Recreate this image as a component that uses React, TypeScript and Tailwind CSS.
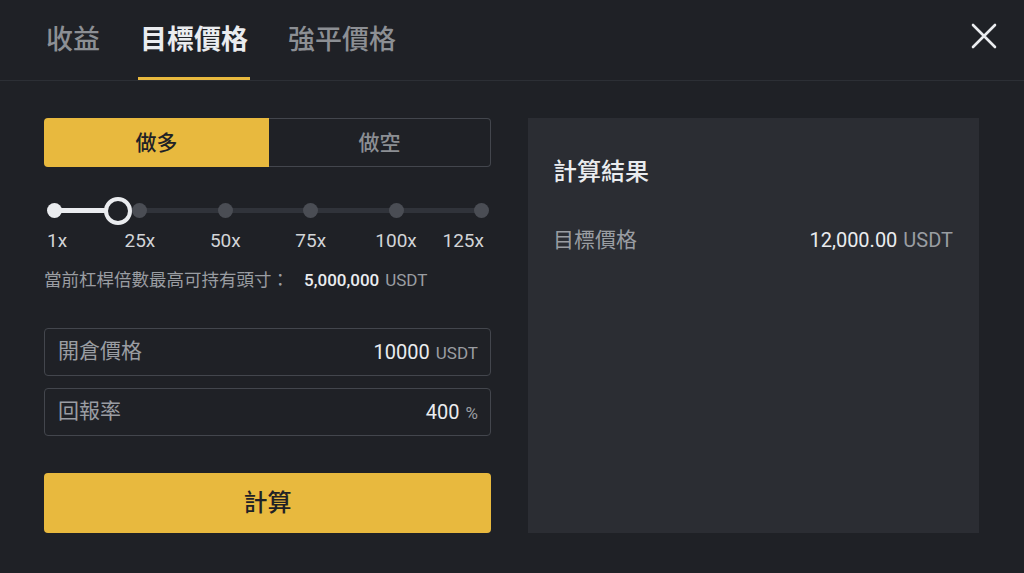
import { useState } from "react";

const FONT = { fontFamily: "Roboto, 'Noto Sans CJK TC', 'Noto Sans', sans-serif" };

const tabs = ["收益", "目標價格", "強平價格"];
const ticks = ["1x", "25x", "50x", "75x", "100x", "125x"];

const CloseIcon = () => (
  <svg width="26" height="26" viewBox="0 0 26 26" fill="none">
    <path d="M2 2L24 24M24 2L2 24" stroke="#eaecef" strokeWidth="2.6" strokeLinecap="round" />
  </svg>
);

const Field = ({ label, value, unit }: { label: string; value: string; unit: string }) => (
  <div className="h-[48px] rounded-[4px] border border-[#43464d] flex items-center justify-between pl-[13px] pr-[12px]">
    <span className="text-[21px] text-[#9a9da2]">{label}</span>
    <span className="flex items-baseline gap-[6px]">
      <span className="text-[20px] text-[#eaecef]">{value}</span>
      <span className="text-[17px] text-[#9a9da2]">{unit}</span>
    </span>
  </div>
);

export default function App() {
  const [active, setActive] = useState(1);
  const [side, setSide] = useState<"long" | "short">("long");

  return (
    <div className="w-[1024px] h-[573px] bg-[#1f2126] overflow-hidden" style={FONT}>
      {/* header */}
      <div className="h-[81px] border-b border-[#2c2f35] flex items-center justify-between pl-[46px] pr-[27px]">
        <div className="flex h-full gap-[40px]">
          {tabs.map((t, i) => (
            <button
              key={t}
              onClick={() => setActive(i)}
              className={`relative h-full flex items-center text-[27px] leading-none ${
                i === active ? "text-[#eaecef] font-bold" : "text-[#8c8f94] font-medium"
              }`}
            >
              {t}
              {i === active && (
                <span className="absolute -left-[2px] -right-[2px] bottom-0 h-[3px] bg-[#e8b93e]" />
              )}
            </button>
          ))}
        </div>
        <button className="mb-[8px]">
          <CloseIcon />
        </button>
      </div>

      {/* body */}
      <div className="flex gap-[37px] pt-[37px] pl-[44px] pr-[45px]">
        <div className="w-[447px] flex flex-col">
          <div className="flex h-[49px]">
            <button
              onClick={() => setSide("long")}
              className={`w-[225px] rounded-l-[4px] text-[21px] font-medium pt-[2px] ${
                side === "long" ? "bg-[#e8b93e] text-[#1f2126]" : "border border-r-0 border-[#43464d] text-[#8c8f94]"
              }`}
            >
              做多
            </button>
            <button
              onClick={() => setSide("short")}
              className={`flex-1 rounded-r-[4px] text-[21px] font-medium pt-[2px] ${
                side === "short" ? "bg-[#e8b93e] text-[#1f2126]" : "border border-l-0 border-[#43464d] text-[#8c8f94]"
              }`}
            >
              做空
            </button>
          </div>

          {/* leverage slider */}
          <div className="relative mt-[36px] px-[3px] pr-[2px]">
            <div className="absolute left-[10px] right-[9px] top-[5px] h-[5px] bg-[#30333a]" />
            <div className="absolute left-[10px] w-[64px] top-[5px] h-[5px] bg-[#eaecef]" />
            <div className="relative flex justify-between">
              {ticks.map((t, i) => (
                <div
                  key={t}
                  className={`w-[15px] flex flex-col ${
                    i === 0 ? "items-start" : i === ticks.length - 1 ? "items-end" : "items-center"
                  }`}
                >
                  <div className={`w-[15px] h-[15px] rounded-full ${i === 0 ? "bg-[#eaecef]" : "bg-[#4a4d54]"}`} />
                  <span
                    className={`mt-[12px] text-[19px] leading-[22px] text-[#d2d4d7] whitespace-nowrap ${
                      i === ticks.length - 1 ? "mr-[5px]" : ""
                    }`}
                  >
                    {t}
                  </span>
                </div>
              ))}
            </div>
            <div className="absolute left-[60px] -top-[6.5px] w-[28px] h-[28px] rounded-full border-[4px] border-[#eaecef] bg-[#1f2126]" />
          </div>

          <div className="mt-[16px] flex items-baseline leading-[24px]">
            <span className="text-[17.5px] text-[#9a9da2]">當前杠桿倍數最高可持有頭寸：</span>
            <span className="ml-[15px] text-[17px] font-medium text-[#eaecef]">5,000,000</span>
            <span className="ml-[6px] text-[17px] text-[#9a9da2]">USDT</span>
          </div>

          <div className="mt-[36px]">
            <Field label="開倉價格" value="10000" unit="USDT" />
          </div>
          <div className="mt-[12px]">
            <Field label="回報率" value="400" unit="%" />
          </div>

          <button className="mt-[37px] h-[60px] rounded-[4px] bg-[#e8b93e] text-[24px] font-medium text-[#1f2126]">
            計算
          </button>
        </div>

        {/* result panel */}
        <div className="flex-1 bg-[#2b2d33] pt-[38px] pl-[25px] pr-[26px]">
          <div className="text-[24px] leading-[32px] font-medium text-[#eaecef]">計算結果</div>
          <div className="mt-[38px] flex items-baseline justify-between leading-[28px]">
            <span className="text-[21px] text-[#9a9da2]">目標價格</span>
            <span className="flex items-baseline gap-[6px]">
              <span className="text-[20px] text-[#eaecef]">12,000.00</span>
              <span className="text-[20px] text-[#9a9da2]">USDT</span>
            </span>
          </div>
        </div>
      </div>
    </div>
  );
}
